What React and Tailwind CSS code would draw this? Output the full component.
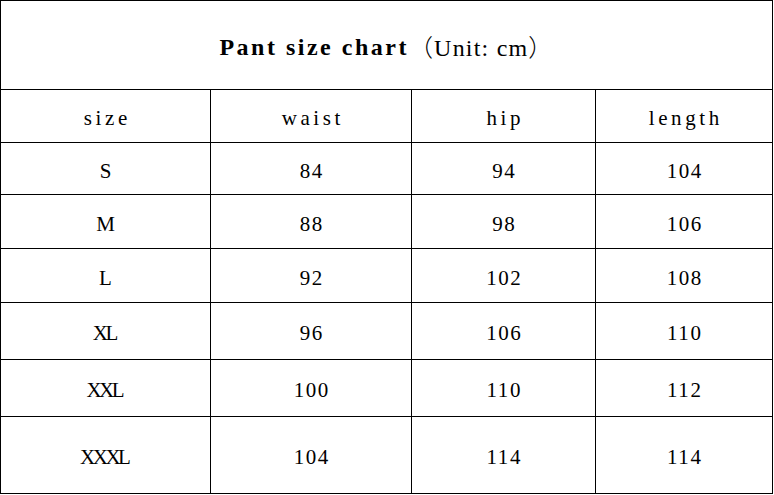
export default function App() {
  const rows = [
    ["S", "84", "94", "104"],
    ["M", "88", "98", "106"],
    ["L", "92", "102", "108"],
    ["XL", "96", "106", "110"],
    ["XXL", "100", "110", "112"],
    ["XXXL", "104", "114", "114"],
  ];
  const head = ["size", "waist", "hip", "length"];
  const font = { fontFamily: '"Liberation Serif", "Noto Sans CJK SC", serif' };
  return (
    <div className="bg-white w-[774px] h-[495px]" style={font}>
      <div className="grid grid-cols-[210px_201px_184px_177px] grid-rows-[89px_53px_52px_54px_54px_57px_57px_77px] w-[773px] border-l border-t border-black text-black">
        <div className="col-span-4 flex items-center justify-center border-r border-b border-black pt-[3px] text-[24px]">
          <span className="font-bold tracking-[2.5px]">Pant size chart</span>
          <span className="tracking-[1.2px]">
            <span style={{ fontFamily: '"Noto Sans CJK SC", sans-serif' }} className="font-light">（</span>
            Unit: cm
            <span style={{ fontFamily: '"Noto Sans CJK SC", sans-serif' }} className="font-light">）</span>
          </span>
        </div>
        {head.map((h) => (
          <div key={h} className="flex items-center justify-center border-r border-b border-black pt-[6px] text-[21px] tracking-[3.6px]">
            <span className="mr-[-3.6px]">{h}</span>
          </div>
        ))}
        {rows.map((r) =>
          r.map((c, i) => (
            <div
              key={r[0] + i}
              className={
                i === 0
                  ? "flex items-center justify-center border-r border-b border-black pt-[6px] text-[21px] tracking-[-2.5px]"
                  : "flex items-center justify-center border-r border-b border-black pt-[6px] text-[21px] tracking-[1.6px]"
              }
            >
              <span className={i === 0 ? "mr-[2.5px]" : "mr-[-1.6px]"}>{c}</span>
            </div>
          ))
        )}
      </div>
    </div>
  );
}
